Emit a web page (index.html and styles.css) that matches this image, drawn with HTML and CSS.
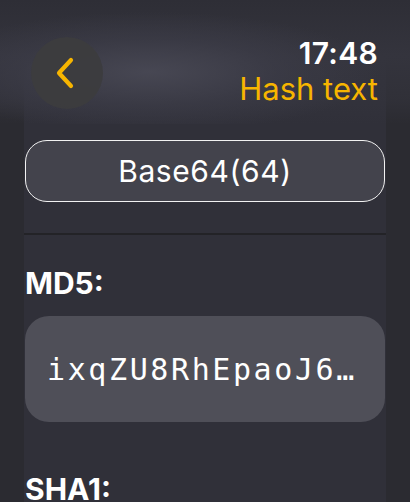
FILE: index.html
```html
<!DOCTYPE html>
<html lang="en">
<head>
    <meta charset="UTF-8">
    <meta name="viewport" content="width=device-width, initial-scale=1.0">
    <title>Hash text</title>
    <link rel="stylesheet" href="styles.css">
</head>
<body>

    <header class="top-bar">
        <button class="back-btn" aria-label="Back">
            <svg width="20" height="32" viewBox="0 0 20 32">
                <path d="M16 3 L4 16 L16 29" fill="none" stroke="#f7b500" stroke-width="4.2" stroke-linecap="round" stroke-linejoin="round"/>
            </svg>
        </button>
        <div class="title-box">
            <div class="clock">17:48</div>
            <div class="title">Hash text</div>
        </div>
    </header>

    <main class="content">
        <button class="mode-btn">Base64(64)</button>

        <div class="divider"></div>

        <section class="hash-block">
            <h3>MD5:</h3>
            <div class="hash-card">ixqZU8RhEpaoJ6HhjPQgyw==</div>
        </section>

        <section class="hash-block">
            <h3>SHA1:</h3>
            <div class="hash-card">qZk+NkcGgWq6PiVxeFDCbJzQ2J0=</div>
        </section>
    </main>

</body>
</html>
```

FILE: styles.css
```css
body {
    font-family: 'Inter', 'Roboto', sans-serif;
    margin: 0;
    padding: 0;
    color: #ffffff;
    width: 410px;
    height: 502px;
    overflow: hidden;
    background: linear-gradient(to right, #2b2b31 0, #2b2b31 24px, #303039 24px, #303039 386px, #2b2b31 386px);
}

.top-bar {
    height: 124px;
    box-sizing: border-box;
    padding: 37px 32px 0 31px;
    display: flex;
    justify-content: space-between;
    align-items: flex-start;
    background:
        radial-gradient(ellipse 230px 60px at 150px 72px, rgba(72, 72, 84, 0.95) 0%, rgba(62, 62, 74, 0.6) 55%, rgba(48, 48, 57, 0) 100%),
        linear-gradient(to bottom, #2e2e36 0%, #34343d 45%, rgba(52, 52, 61, 0.6) 80%, rgba(48, 48, 57, 0) 100%);
}

.back-btn {
    width: 72px;
    height: 72px;
    border-radius: 50%;
    border: none;
    background-color: rgba(60, 60, 62, 0.95);
    display: flex;
    align-items: center;
    justify-content: center;
    padding: 0 4px 0 0;
    cursor: pointer;
}

.title-box {
    text-align: right;
}

.clock {
    font-size: 30px;
    font-weight: 600;
    line-height: 32px;
    letter-spacing: 0.3px;
}

.title {
    font-size: 31px;
    line-height: 40px;
    color: #f7b500;
    font-weight: 400;
}

.content {
    margin: 0 24px;
    padding-top: 16px;
}

.mode-btn {
    display: block;
    width: 360px;
    height: 62px;
    margin-left: 1px;
    border: 1.5px solid #f2f2f2;
    border-radius: 22px;
    background-color: #43434c;
    color: #ffffff;
    font-family: 'Inter', 'Roboto', sans-serif;
    font-size: 30px;
    font-weight: 400;
    letter-spacing: 0.6px;
    cursor: pointer;
}

.divider {
    height: 2px;
    background-color: #232327;
    margin-top: 31px;
}

.hash-block {
    padding: 0 1px;
}

.hash-block h3 {
    margin: 33px 0 18px 0;
    font-size: 30px;
    font-weight: 700;
    line-height: 30px;
}

.hash-card {
    height: 106px;
    box-sizing: border-box;
    padding: 0 20px 0 22px;
    border-radius: 24px;
    background-color: #4f4f58;
    font-family: 'DejaVu Sans Mono', 'Liberation Mono', monospace;
    font-size: 30px;
    letter-spacing: 2.6px;
    line-height: 108px;
    white-space: nowrap;
    overflow: hidden;
    text-overflow: ellipsis;
}

.hash-block + .hash-block h3 {
    margin-top: 52px;
}
```
